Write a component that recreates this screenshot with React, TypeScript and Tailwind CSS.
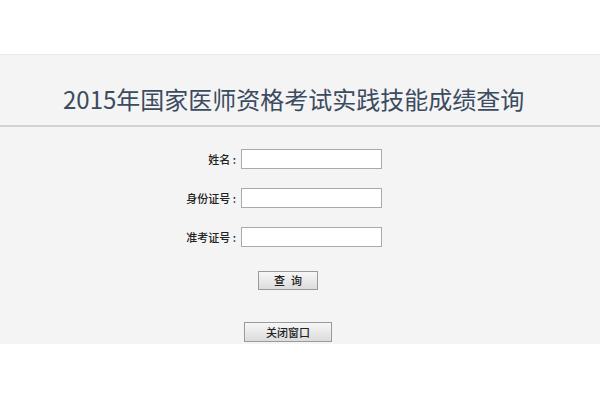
import React from 'react';

const cjk = { fontFamily: '"Noto Sans CJK SC", "Noto Sans", sans-serif' };

function Row({ label }: { label: string }) {
  return (
    <div className="flex items-center h-[20px]">
      <label className="w-[241px] text-right text-[11px] text-[#222] font-medium pr-[5px]">{label} :</label>
      <input type="text" className="w-[141px] h-[20px] bg-white border border-[#a9a9a9] outline-none" />
    </div>
  );
}

export default function App() {
  return (
    <div className="w-[600px] h-[400px] bg-white" style={cjk}>
      <div className="h-[55px] bg-white border-b border-[#e8e8e8]" />
      <div className="h-[289px] bg-[#f4f4f4]">
        <div className="h-[72px] border-b-2 border-[#d2d2d2] flex items-end pb-[10px] pl-[63px]">
          <h1 className="text-[24px] leading-[32px] text-[#3b4b60]">2015年国家医师资格考试实践技能成绩查询</h1>
        </div>
        <div className="pt-[22px] flex flex-col gap-[19px]">
          <Row label="姓名" />
          <Row label="身份证号" />
          <Row label="准考证号" />
        </div>
        <div className="flex flex-col">
          <button className="ml-[258px] mt-[24px] w-[60px] h-[19px] border border-[#9a9a9a] bg-gradient-to-b from-[#f7f7f7] to-[#dcdcdc] text-[11px] text-[#222] font-medium leading-none tracking-[6px] pl-[6px]">查询</button>
          <button className="ml-[244px] mt-[32px] w-[88px] h-[20px] border border-[#9a9a9a] bg-gradient-to-b from-[#f7f7f7] to-[#dcdcdc] text-[11px] text-[#222] font-medium leading-none">关闭窗口</button>
        </div>
      </div>
    </div>
  );
}
